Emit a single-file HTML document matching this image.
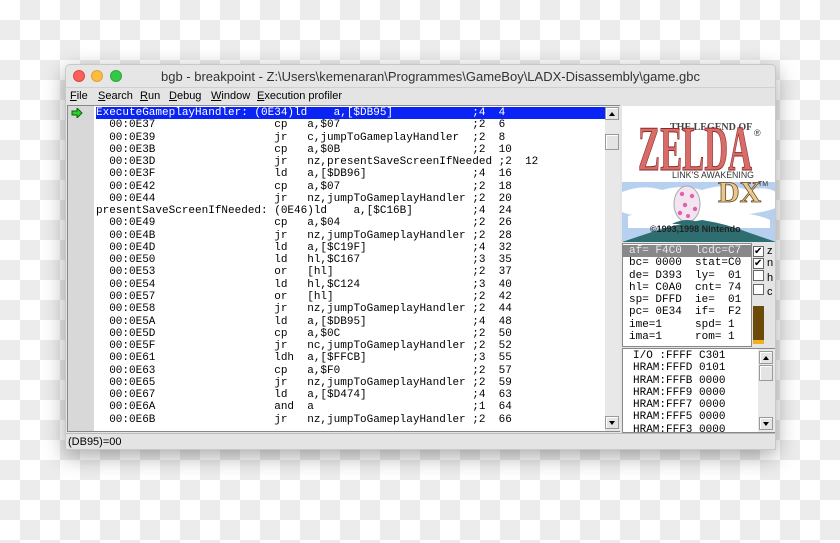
<!DOCTYPE html>
<html><head><meta charset="utf-8"><style>
*{margin:0;padding:0;box-sizing:border-box}
body{width:840px;height:543px;overflow:hidden;position:relative;font-family:"Liberation Sans",sans-serif;
background-color:#fff;background-image:linear-gradient(45deg,#ececec 25%,transparent 25%,transparent 75%,#ececec 75%),linear-gradient(45deg,#ececec 25%,transparent 25%,transparent 75%,#ececec 75%);background-size:40px 40px;background-position:0 0,20px 20px}
.win{position:absolute;left:65px;top:64px;width:711px;height:386px;background:#e4e4e4;border-radius:5px 5px 0 0;box-shadow:0 6px 22px rgba(0,0,0,.35);border:1px solid #c8c8c8;overflow:hidden}
.title{position:absolute;left:0;top:0;width:100%;height:23px;background:#e6e6e6;border-bottom:1px solid #d0d0d0;font-size:13px;color:#333;text-align:center;line-height:23px;padding-left:20px}
.dot{position:absolute;top:5px;width:12px;height:12px;border-radius:50%}
.menu{position:absolute;left:0;top:24px;height:15px;width:100%;font-size:11px;line-height:15px;color:#000}
.menu span{position:absolute}
.code{position:absolute;left:1px;top:40px;width:553px;height:327px;background:#fff;border:1px solid #888}
.gut{position:absolute;left:0;top:0;width:26px;height:100%;background:#d8d8d8}
.rows{position:absolute;left:28px;top:1px;font-family:"Liberation Mono",monospace;font-size:11px}
.r{position:relative;height:12.28px;line-height:12px;white-space:pre;width:509px}
.r span{position:absolute;top:0}
.sel{background:#0a24f5;color:#fff;text-decoration:underline}
.sb{position:absolute;background:#e8e8e8}
.btn{position:absolute;width:14px;height:13px;background:#e4e4e4;border:1px solid #999;box-shadow:inset 1px 1px #fff}
.btn:after{content:"";position:absolute;left:3px;top:4px;border-left:3px solid transparent;border-right:3px solid transparent}
.up:after{border-bottom:4px solid #000}
.dn:after{border-top:4px solid #000}
.mono{font-family:"Liberation Mono",monospace;font-size:11px;white-space:pre}
</style></head><body>
<div class="win">
 <div class="title">bgb - breakpoint - Z:\Users\kemenaran\Programmes\GameBoy\LADX-Disassembly\game.gbc
  <div class="dot" style="left:7px;background:#fc605c;border:1px solid #e0443e"></div>
  <div class="dot" style="left:25px;background:#fdbc40;border:1px solid #dea236"></div>
  <div class="dot" style="left:44px;background:#34c84a;border:1px solid #27aa35"></div>
 </div>
 <div class="menu"><span style="left:4px"><u>F</u>ile</span><span style="left:32px"><u>S</u>earch</span><span style="left:74px"><u>R</u>un</span><span style="left:103px"><u>D</u>ebug</span><span style="left:145px"><u>W</u>indow</span><span style="left:191px"><u>E</u>xecution profiler</span></div>
 <div class="code">
  <div class="gut"></div>
  <svg style="position:absolute;left:3px;top:2px" width="12" height="10"><path d="M1 3h5V0l5 5-5 5V7H1z" fill="#3c3" stroke="#060" stroke-width="1"/></svg>
  <div class="rows">
   <div class="r sel"><span style="left:0">ExecuteGameplayHandler: (0E34)ld</span><span style="left:36ch">a,[$DB95]</span><span style="left:57ch">;4</span><span style="left:61ch">4</span></div>
   <div class="r"><span style="left:2ch">00:0E37</span><span style="left:27ch">cp</span><span style="left:32ch">a,$07</span><span style="left:57ch">;2</span><span style="left:61ch">6</span></div>
   <div class="r"><span style="left:2ch">00:0E39</span><span style="left:27ch">jr</span><span style="left:32ch">c,jumpToGameplayHandler</span><span style="left:57ch">;2</span><span style="left:61ch">8</span></div>
   <div class="r"><span style="left:2ch">00:0E3B</span><span style="left:27ch">cp</span><span style="left:32ch">a,$0B</span><span style="left:57ch">;2</span><span style="left:61ch">10</span></div>
   <div class="r"><span style="left:2ch">00:0E3D</span><span style="left:27ch">jr</span><span style="left:32ch">nz,presentSaveScreenIfNeeded</span><span style="left:61ch">;2</span><span style="left:65ch">12</span></div>
   <div class="r"><span style="left:2ch">00:0E3F</span><span style="left:27ch">ld</span><span style="left:32ch">a,[$DB96]</span><span style="left:57ch">;4</span><span style="left:61ch">16</span></div>
   <div class="r"><span style="left:2ch">00:0E42</span><span style="left:27ch">cp</span><span style="left:32ch">a,$07</span><span style="left:57ch">;2</span><span style="left:61ch">18</span></div>
   <div class="r"><span style="left:2ch">00:0E44</span><span style="left:27ch">jr</span><span style="left:32ch">nz,jumpToGameplayHandler</span><span style="left:57ch">;2</span><span style="left:61ch">20</span></div>
   <div class="r"><span style="left:0">presentSaveScreenIfNeeded: (0E46)ld</span><span style="left:39ch">a,[$C16B]</span><span style="left:57ch">;4</span><span style="left:61ch">24</span></div>
   <div class="r"><span style="left:2ch">00:0E49</span><span style="left:27ch">cp</span><span style="left:32ch">a,$04</span><span style="left:57ch">;2</span><span style="left:61ch">26</span></div>
   <div class="r"><span style="left:2ch">00:0E4B</span><span style="left:27ch">jr</span><span style="left:32ch">nz,jumpToGameplayHandler</span><span style="left:57ch">;2</span><span style="left:61ch">28</span></div>
   <div class="r"><span style="left:2ch">00:0E4D</span><span style="left:27ch">ld</span><span style="left:32ch">a,[$C19F]</span><span style="left:57ch">;4</span><span style="left:61ch">32</span></div>
   <div class="r"><span style="left:2ch">00:0E50</span><span style="left:27ch">ld</span><span style="left:32ch">hl,$C167</span><span style="left:57ch">;3</span><span style="left:61ch">35</span></div>
   <div class="r"><span style="left:2ch">00:0E53</span><span style="left:27ch">or</span><span style="left:32ch">[hl]</span><span style="left:57ch">;2</span><span style="left:61ch">37</span></div>
   <div class="r"><span style="left:2ch">00:0E54</span><span style="left:27ch">ld</span><span style="left:32ch">hl,$C124</span><span style="left:57ch">;3</span><span style="left:61ch">40</span></div>
   <div class="r"><span style="left:2ch">00:0E57</span><span style="left:27ch">or</span><span style="left:32ch">[hl]</span><span style="left:57ch">;2</span><span style="left:61ch">42</span></div>
   <div class="r"><span style="left:2ch">00:0E58</span><span style="left:27ch">jr</span><span style="left:32ch">nz,jumpToGameplayHandler</span><span style="left:57ch">;2</span><span style="left:61ch">44</span></div>
   <div class="r"><span style="left:2ch">00:0E5A</span><span style="left:27ch">ld</span><span style="left:32ch">a,[$DB95]</span><span style="left:57ch">;4</span><span style="left:61ch">48</span></div>
   <div class="r"><span style="left:2ch">00:0E5D</span><span style="left:27ch">cp</span><span style="left:32ch">a,$0C</span><span style="left:57ch">;2</span><span style="left:61ch">50</span></div>
   <div class="r"><span style="left:2ch">00:0E5F</span><span style="left:27ch">jr</span><span style="left:32ch">nc,jumpToGameplayHandler</span><span style="left:57ch">;2</span><span style="left:61ch">52</span></div>
   <div class="r"><span style="left:2ch">00:0E61</span><span style="left:27ch">ldh</span><span style="left:32ch">a,[$FFCB]</span><span style="left:57ch">;3</span><span style="left:61ch">55</span></div>
   <div class="r"><span style="left:2ch">00:0E63</span><span style="left:27ch">cp</span><span style="left:32ch">a,$F0</span><span style="left:57ch">;2</span><span style="left:61ch">57</span></div>
   <div class="r"><span style="left:2ch">00:0E65</span><span style="left:27ch">jr</span><span style="left:32ch">nz,jumpToGameplayHandler</span><span style="left:57ch">;2</span><span style="left:61ch">59</span></div>
   <div class="r"><span style="left:2ch">00:0E67</span><span style="left:27ch">ld</span><span style="left:32ch">a,[$D474]</span><span style="left:57ch">;4</span><span style="left:61ch">63</span></div>
   <div class="r"><span style="left:2ch">00:0E6A</span><span style="left:27ch">and</span><span style="left:32ch">a</span><span style="left:57ch">;1</span><span style="left:61ch">64</span></div>
   <div class="r"><span style="left:2ch">00:0E6B</span><span style="left:27ch">jr</span><span style="left:32ch">nz,jumpToGameplayHandler</span><span style="left:57ch">;2</span><span style="left:61ch">66</span></div>
  </div>
  <div class="sb" style="left:537px;top:0;width:15px;height:325px"></div>
  <div class="btn up" style="left:537px;top:1px"></div>
  <div class="btn" style="left:537px;top:28px;height:16px"></div>
  <div class="btn dn" style="left:537px;top:310px"></div>
 </div>
 <!-- game image -->
 <svg style="position:absolute;left:556px;top:41px" width="154" height="136" viewBox="0 0 154 136">
  <rect width="154" height="136" fill="#fff"/>
  <rect y="76" width="154" height="60" fill="#b8d0f0"/>
  <path d="M0 86q20-8 40-2q20-6 40 0q25-8 45 0q20-4 29 2v16q-30 10-60 6q-30 6-60 0q-20 4-34-2z" fill="#fff"/>
  <path d="M6 110q30-8 60-2q30-6 60 0q14 2 22 6v8h-142z" fill="#fff"/>
  <path d="M0 136l30-10q25-8 50-12q25 4 45 12l29 10z" fill="#2f6e70"/>
  <ellipse cx="65" cy="98" rx="13" ry="18" fill="#f4e4f0" stroke="#aaa"/>
  <g fill="#e060b0"><circle cx="60" cy="88" r="2.2"/><circle cx="70" cy="90" r="2.2"/><circle cx="63" cy="99" r="2.2"/><circle cx="73" cy="103" r="2.2"/><circle cx="58" cy="107" r="2.2"/><circle cx="66" cy="110" r="2"/></g>
  <path d="M50 118q15-8 30 0z" fill="#2f6e70"/>
  <text x="48" y="24" font-family="Liberation Serif" font-size="10" font-weight="bold" fill="#444">THE LEGEND OF</text>
  <text x="16" y="64" font-family="Liberation Serif" font-size="64" font-weight="bold" fill="#d86c68" stroke="#8a2a28" stroke-width="1" textLength="114" lengthAdjust="spacingAndGlyphs">ZELDA</text>
  <text x="132" y="30" font-size="9" fill="#333">®</text>
  <text x="50" y="72" font-size="9" fill="#333" textLength="82" lengthAdjust="spacingAndGlyphs">LINK'S AWAKENING</text>
  <text x="96" y="96" font-family="Liberation Serif" font-size="30" font-weight="bold" fill="#e8c890" stroke="#6a4a20" stroke-width=".8">DX</text>
  <text x="136" y="80" font-size="7" fill="#333">TM</text>
  <text x="28" y="126" font-size="9" font-weight="bold" fill="#222">©1993,1998 Nintendo</text>
 </svg>
 <!-- registers -->
 <div style="position:absolute;left:556px;top:178px;width:130px;height:104px;background:#fff;border:1px solid #888"></div>
 <div style="position:absolute;left:557px;top:180px;width:128px;height:12px;background:#888"></div>
 <div class="mono" style="position:absolute;left:563px;top:180px;line-height:12.3px;color:#000"><span style="color:#e8e8e8">af= F4C0  lcdc=C7</span>
bc= 0000  stat=C0
de= D393  ly=  01
hl= C0A0  cnt= 74
sp= DFFD  ie=  01
pc= 0E34  if=  F2
ime=1     spd= 1
ima=1     rom= 1</div>
 <div style="position:absolute;left:687px;top:180px;font-size:11px;line-height:12.4px">
  <div><span style="display:inline-block;width:11px;height:11px;border:1px solid #666;background:#fff;font-size:10px;line-height:9px">✔</span> z</div>
  <div><span style="display:inline-block;width:11px;height:11px;border:1px solid #666;background:#fff;font-size:10px;line-height:9px">✔</span> n</div>
  <div><span style="display:inline-block;width:11px;height:11px;border:1px solid #666;background:#fff"></span> h</div>
  <div><span style="display:inline-block;width:11px;height:11px;border:1px solid #666;background:#fff"></span> c</div>
 </div>
 <div style="position:absolute;left:687px;top:241px;width:11px;height:38px;background:#6b4a0a;border-bottom:4px solid #f0b020"></div>
 <!-- memory -->
 <div style="position:absolute;left:556px;top:283px;width:154px;height:85px;background:#fff;border:1px solid #888;overflow:hidden">
  <div class="mono" style="position:absolute;left:10px;top:1px;line-height:12.3px">I/O :FFFF C301
HRAM:FFFD 0101
HRAM:FFFB 0000
HRAM:FFF9 0000
HRAM:FFF7 0000
HRAM:FFF5 0000
HRAM:FFF3 0000</div>
  <div class="sb" style="left:135px;top:0;width:17px;height:83px"></div>
  <div class="btn up" style="left:136px;top:2px"></div>
  <div class="btn" style="left:136px;top:16px;height:16px"></div>
  <div class="btn dn" style="left:136px;top:68px"></div>
 </div>
 <!-- status -->
 <div style="position:absolute;left:0;top:368px;width:100%;height:18px;border-top:1px solid #bbb;background:#e4e4e4;font-size:11px;line-height:17px;padding-left:2px">(DB95)=00</div>
</div>
</body></html>
